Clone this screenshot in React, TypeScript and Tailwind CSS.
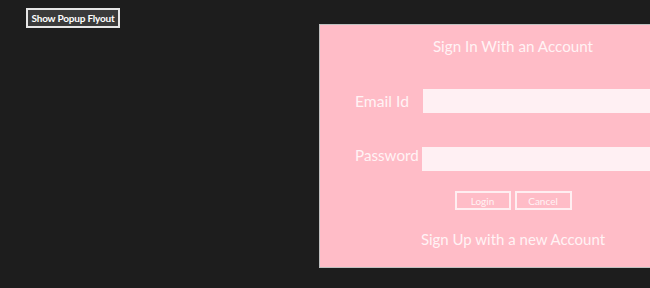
export default function App() {
  return (
    <div
      className="flex h-[288px] w-[650px] items-start overflow-hidden bg-[#1d1d1d] pl-[26px]"
      style={{ fontFamily: 'Lato, "Open Sans", sans-serif' }}
    >
      <button className="mt-[8px] h-[20px] w-[94px] shrink-0 whitespace-nowrap border-2 border-[#e6e6e6] bg-[#3a3a3a] text-[10px] leading-none font-bold tracking-[-0.2px] text-white">
        Show Popup Flyout
      </button>

      <div className="mt-[24px] ml-[199px] flex h-[244px] w-[388px] shrink-0 flex-col border border-[#bfbfbf] bg-[#ffbcc7] text-[#fff3f5]">
        <h2 className="pt-[11px] text-center text-[15.2px] leading-[20px]">Sign In With an Account</h2>

        <div className="mt-[33px] flex items-center pl-[35px]">
          <label className="w-[68px] text-[15.7px] leading-[24px]">Email Id</label>
          <div className="h-[24px] w-[260px] bg-[#fff0f3]" />
        </div>

        <div className="mt-[34px] flex items-start pl-[35px]">
          <label className="w-[67px] text-[15.2px] leading-[17px]">Password</label>
          <div className="h-[24px] w-[260px] bg-[#fff0f3]" />
        </div>

        <div className="mt-[20px] flex justify-center gap-[4px]">
          <button className="h-[19px] w-[56px] whitespace-nowrap border-2 border-[#ffeef1] text-[10px] leading-none">Login</button>
          <button className="h-[19px] w-[57px] whitespace-nowrap border-2 border-[#ffeef1] text-[10px] leading-none">Cancel</button>
        </div>

        <p className="mt-[18px] text-center text-[15px] leading-[22px]">Sign Up with a new Account</p>
      </div>
    </div>
  )
}
